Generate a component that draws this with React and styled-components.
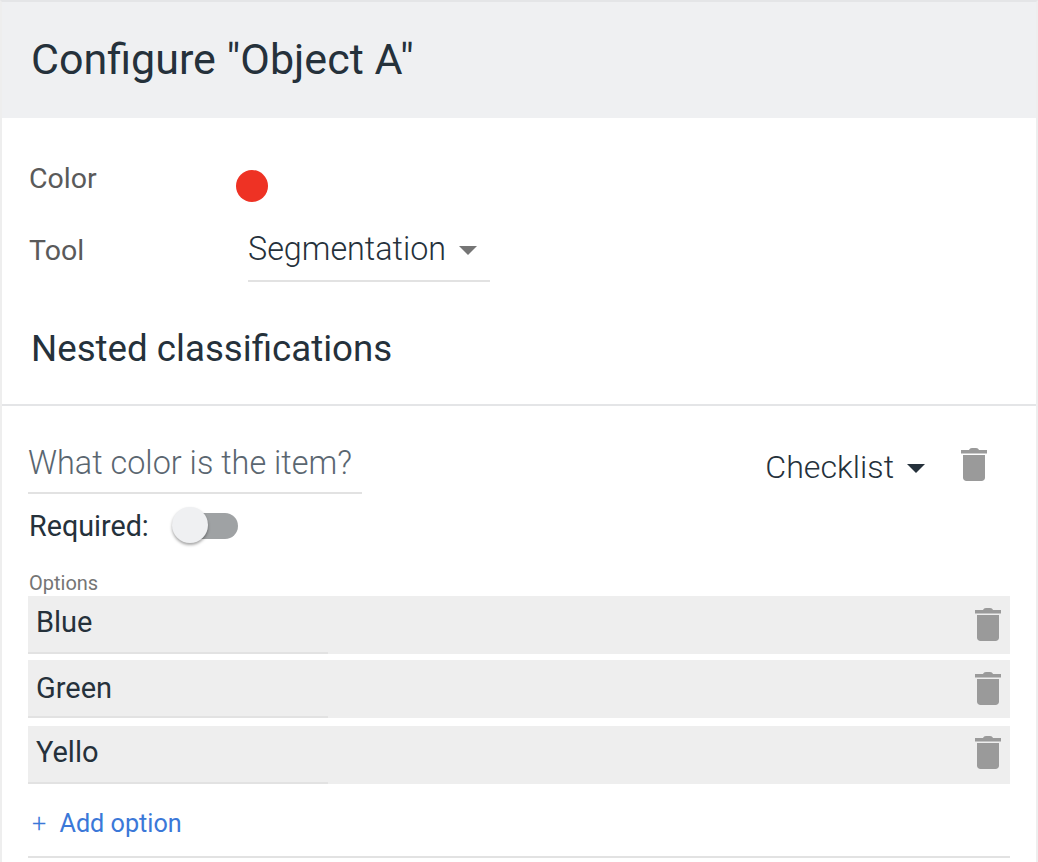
import React from 'react';
import styled, { createGlobalStyle } from 'styled-components';

const Global = createGlobalStyle`
  html, body { margin: 0; padding: 0; background: #fff; }
  body { font-family: Roboto, "Liberation Sans", sans-serif; color: #25313b; overflow: hidden; }
`;

function Trash() {
  return (
    <TrashSvg width="26" height="33" viewBox="0 0 26 33">
      <path d="M8 2 C8.500 0.700 9.500 0 11 0 H15 C16.500 0 17.500 0.700 18 2 H26 V5.500 H0 V2 Z" />
      <path d="M2 7 H24 V29.500 C24 31.500 22.500 33 20.500 33 H5.500 C3.500 33 2 31.500 2 29.500 Z" />
    </TrashSvg>
  );
}

const options = [
  { name: 'Blue', nameTop: 10, trashTop: 12, gap: 6 },
  { name: 'Green', nameTop: 12, trashTop: 12, gap: 8 },
  { name: 'Yello', nameTop: 10, trashTop: 10, gap: 0 },
];

export default function App() {
  return (
    <Frame>
      <Global />
      <Header>
        <Title>Configure "Object A"</Title>
      </Header>
      <Settings>
        <ColorRow>
          <FieldLabel>Color</FieldLabel>
          <Dot />
        </ColorRow>
        <ToolRow>
          <FieldLabel>Tool</FieldLabel>
          <ToolSelect>
            Segmentation
            <Caret $color="#757575" />
          </ToolSelect>
        </ToolRow>
        <SubTitle>Nested classifications</SubTitle>
      </Settings>
      <Classification>
        <QuestionRow>
          <Question>What color is the item?</Question>
          <TypeSelect>
            Checklist
            <Caret $color="#25313b" />
          </TypeSelect>
          <Trash />
        </QuestionRow>
        <RequiredRow>
          <RequiredLabel>Required:</RequiredLabel>
          <Switch>
            <Knob />
          </Switch>
        </RequiredRow>
        <OptionsLabel>Options</OptionsLabel>
        <OptionList>
          {options.map((o) => (
            <OptionRow key={o.name} $trashTop={o.trashTop} $gap={o.gap}>
              <OptionName $top={o.nameTop}>{o.name}</OptionName>
              <Trash />
            </OptionRow>
          ))}
        </OptionList>
        <AddOption>
          <Plus>+</Plus> Add option
        </AddOption>
        <Divider />
      </Classification>
    </Frame>
  );
}

const Frame = styled.div`
  width: 1038px;
  height: 862px;
  box-sizing: border-box;
  border-top: 2px solid #e4e5e7;
  border-left: 2px solid #eeeeee;
  border-right: 2px solid #eeeeee;
  overflow: hidden;
`;

const Header = styled.div`
  height: 116px;
  box-sizing: border-box;
  background: #eff0f2;
  display: flex;
  align-items: center;
  padding: 0 0 2px 29px;
`;

const Title = styled.h1`
  margin: 0;
  font-size: 43px;
  font-weight: 400;
  line-height: 50px;
  color: #25313b;
`;

const Settings = styled.div`
  height: 288px;
  padding: 45px 0 0 27px;
  box-sizing: border-box;
  border-bottom: 2px solid #e4e5e7;
`;

const ColorRow = styled.div`
  display: flex;
  height: 72px;
`;

const ToolRow = styled.div`
  display: flex;
  height: 60px;
  align-items: flex-start;
`;

const FieldLabel = styled.div`
  width: 207px;
  font-size: 28.500px;
  line-height: 32px;
  color: #5a5a5a;
`;

const Dot = styled.div`
  width: 32px;
  height: 32px;
  margin-top: 7px;
  border-radius: 50%;
  background: #ee3224;
`;

const ToolSelect = styled.div`
  margin: -6px 0 0 12px;
  width: 242px;
  height: 51px;
  border-bottom: 2px solid #e2e2e2;
  font-size: 32.300px;
  font-weight: 300;
  line-height: 40px;
  display: flex;
  align-items: flex-start;
  color: #25313b;
`;

const Caret = styled.span`
  width: 0;
  height: 0;
  margin: 17px 0 0 13px;
  border-left: 9px solid transparent;
  border-right: 9px solid transparent;
  border-top: 9px solid ${(p) => p.$color};
`;

const SubTitle = styled.h2`
  margin: 34px 0 0 2px;
  font-size: 36.700px;
  font-weight: 400;
  line-height: 40px;
  color: #25313b;
`;

const Classification = styled.div`
  padding: 0 26px;
`;

const TrashSvg = styled.svg`
  fill: #9a9a9a;
  flex: none;
`;

const QuestionRow = styled.div`
  display: flex;
  align-items: flex-start;
  padding: 37px 23px 0 0;
  height: 88px;
  box-sizing: border-box;
  ${TrashSvg} {
    margin-top: 5px;
  }
`;

const Question = styled.div`
  width: 334px;
  height: 49px;
  border-bottom: 2px solid #e2e2e2;
  font-size: 32.400px;
  font-weight: 300;
  line-height: 40px;
  color: #5a6670;
  margin-right: auto;
`;

const TypeSelect = styled.div`
  display: flex;
  margin: 4px 36px 0 0;
  font-size: 32.200px;
  font-weight: 300;
  line-height: 40px;
`;

const RequiredRow = styled.div`
  display: flex;
  align-items: center;
  height: 64px;
`;

const RequiredLabel = styled.div`
  width: 120px;
  font-size: 28.700px;
  margin-left: 1px;
`;

const Switch = styled.div`
  position: relative;
  width: 50px;
  height: 26px;
  margin-left: 39px;
  border-radius: 13px;
  background: #9fa2a4;
`;

const Knob = styled.span`
  position: absolute;
  left: -16px;
  top: -6px;
  width: 36px;
  height: 36px;
  border-radius: 50%;
  background: #eff0f2;
  box-shadow: 0 2px 3px rgba(0, 0, 0, 0.35);
`;

const OptionsLabel = styled.div`
  margin: 12px 0 0 1px;
  font-size: 20px;
  line-height: 26px;
  color: #757575;
`;

const OptionList = styled.div`
  width: 982px;
`;

const OptionRow = styled.div`
  position: relative;
  height: 58px;
  margin-bottom: ${(p) => p.$gap}px;
  background: #eeeeee;
  display: flex;
  align-items: flex-start;
  justify-content: space-between;
  padding: 0 9px 0 8px;
  box-sizing: border-box;
  &::after {
    content: '';
    position: absolute;
    left: 0;
    bottom: 0;
    width: 300px;
    height: 2px;
    background: #e2e2e2;
  }
  ${TrashSvg} {
    margin-top: ${(p) => p.$trashTop}px;
  }
`;

const OptionName = styled.div`
  margin-top: ${(p) => p.$top}px;
  font-size: 29px;
  line-height: 32px;
`;

const AddOption = styled.div`
  margin: 24px 0 0 4px;
  color: #3b78d8;
  font-size: 25.200px;
  line-height: 32px;
`;

const Plus = styled.span`
  font-weight: 300;
  margin-right: 7px;
`;

const Divider = styled.div`
  height: 2px;
  margin-top: 16px;
  width: 982px;
  background: #e2e2e2;
`;
